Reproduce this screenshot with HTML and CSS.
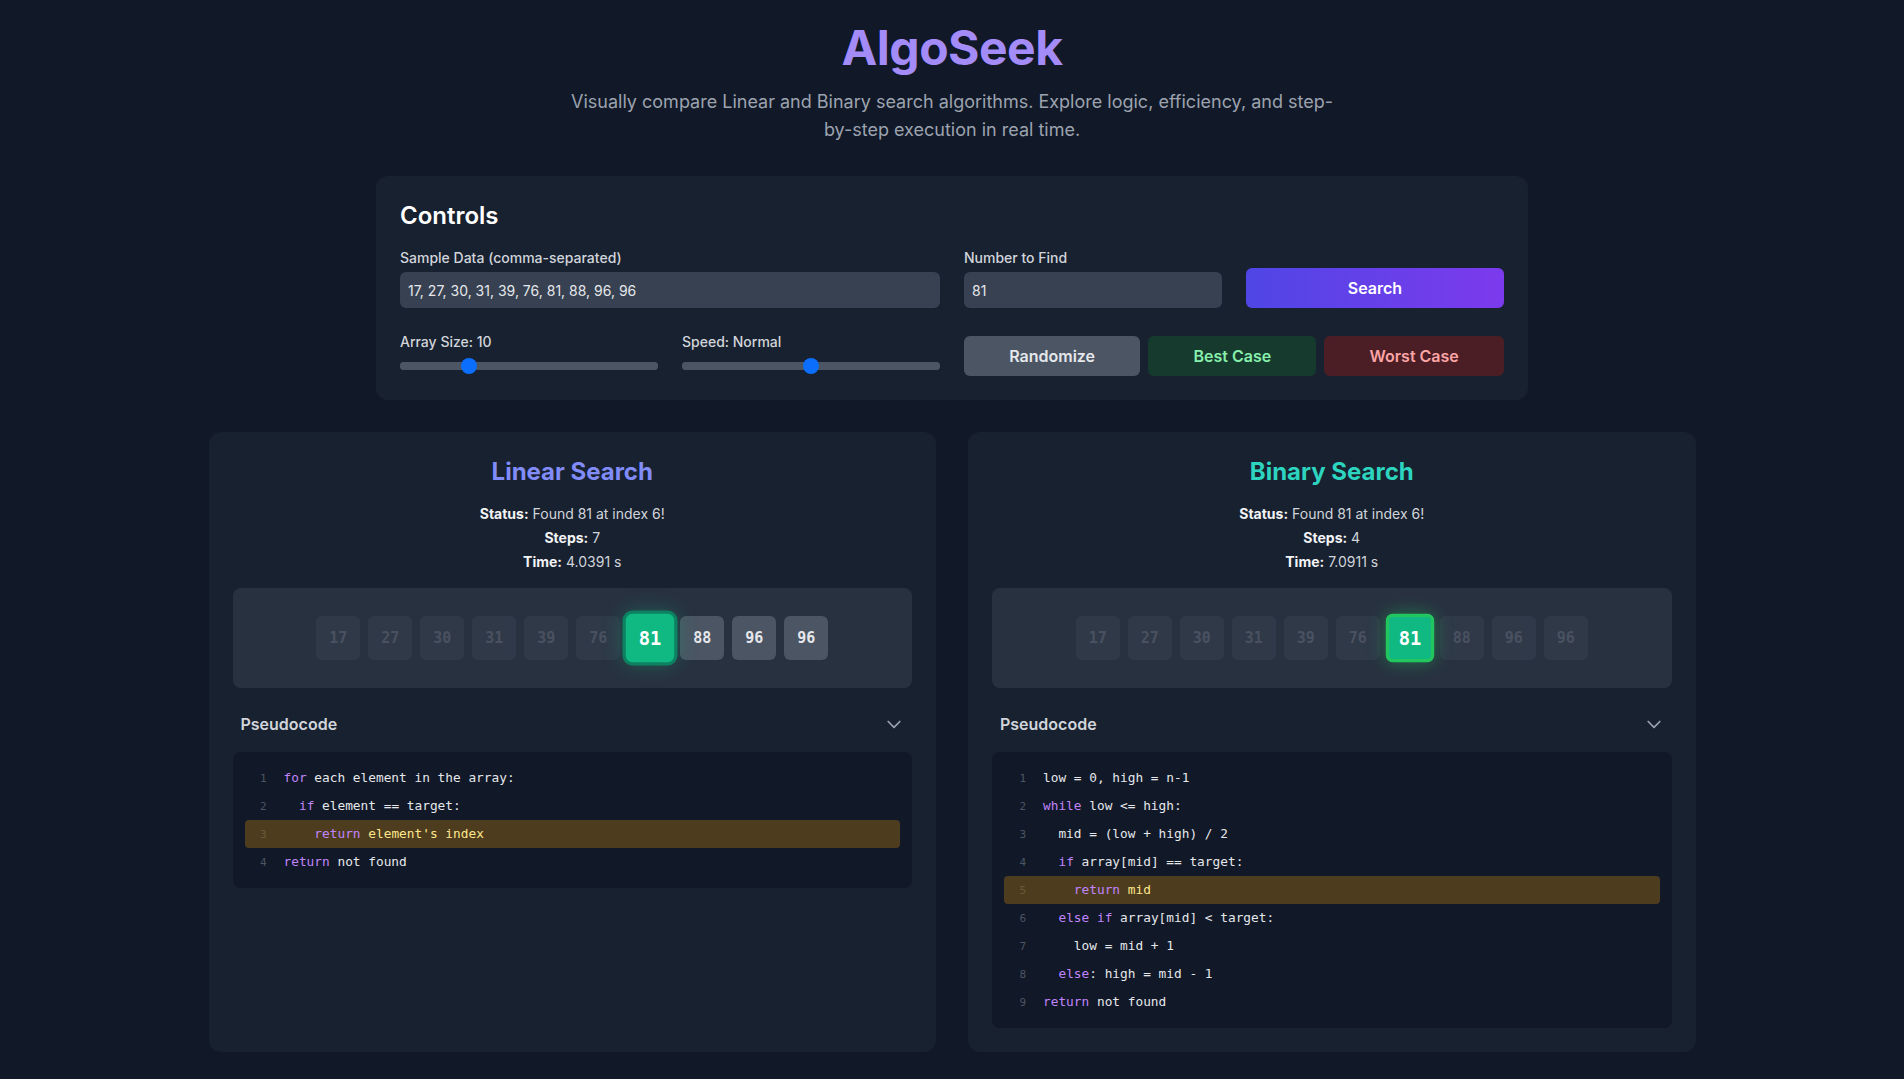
FILE: index.html
```html
<!DOCTYPE html>
<html lang="en">
<head>
<meta charset="utf-8">
<title>AlgoSeek</title>
<link rel="stylesheet" href="styles.css">
</head>
<body>
<div class="page">
  <header class="hero">
    <h1 class="brand">AlgoSeek</h1>
    <p class="tagline">Visually compare Linear and Binary search algorithms. Explore logic, efficiency, and step-by-step execution in real time.</p>
  </header>

  <section class="card controls">
    <h2 class="card-title">Controls</h2>
    <div class="controls-grid">
      <div class="field span-2">
        <label class="label">Sample Data (comma-separated)</label>
        <input class="text-input" type="text" value="17, 27, 30, 31, 39, 76, 81, 88, 96, 96">
      </div>
      <div class="field">
        <label class="label">Number to Find</label>
        <input class="text-input" type="text" value="81">
      </div>
      <button class="btn btn-search">Search</button>

      <div class="field slider-field">
        <label class="label">Array Size: 10</label>
        <input class="range" type="range" min="5" max="25" value="10">
      </div>
      <div class="field slider-field">
        <label class="label">Speed: Normal</label>
        <input class="range" type="range" min="0" max="100" value="50">
      </div>
      <div class="btn-row span-2">
        <button class="btn btn-gray">Randomize</button>
        <button class="btn btn-best">Best Case</button>
        <button class="btn btn-worst">Worst Case</button>
      </div>
    </div>
  </section>

  <main class="panels">
    <section class="card panel">
      <h2 class="panel-title linear">Linear Search</h2>
      <div class="stats">
        <p><b>Status:</b> Found 81 at index 6!</p>
        <p><b>Steps:</b> 7</p>
        <p><b>Time:</b> 4.0391 s</p>
      </div>
      <div class="array-box">
        <div class="cell dim">17</div>
        <div class="cell dim">27</div>
        <div class="cell dim">30</div>
        <div class="cell dim">31</div>
        <div class="cell dim">39</div>
        <div class="cell dim">76</div>
        <div class="cell found found-linear">81</div>
        <div class="cell">88</div>
        <div class="cell">96</div>
        <div class="cell">96</div>
      </div>
      <button class="pseudo-head">
        <span>Pseudocode</span>
        <svg class="chev" width="20" height="20" viewBox="0 0 24 24" fill="none" stroke="currentColor" stroke-width="2" stroke-linecap="round" stroke-linejoin="round"><path d="M19 9l-7 7-7-7"/></svg>
      </button>
      <div class="code">
        <div class="line"><span class="ln">1</span><span class="kw">for</span> each element in the array:</div>
        <div class="line"><span class="ln">2</span>  <span class="kw">if</span> element == target:</div>
        <div class="line hl"><span class="ln">3</span>    <span class="kw">return</span> element's index</div>
        <div class="line"><span class="ln">4</span><span class="kw">return</span> not found</div>
      </div>
    </section>

    <section class="card panel">
      <h2 class="panel-title binary">Binary Search</h2>
      <div class="stats">
        <p><b>Status:</b> Found 81 at index 6!</p>
        <p><b>Steps:</b> 4</p>
        <p><b>Time:</b> 7.0911 s</p>
      </div>
      <div class="array-box">
        <div class="cell dim">17</div>
        <div class="cell dim">27</div>
        <div class="cell dim">30</div>
        <div class="cell dim">31</div>
        <div class="cell dim">39</div>
        <div class="cell dim">76</div>
        <div class="cell found found-binary">81</div>
        <div class="cell dim">88</div>
        <div class="cell dim">96</div>
        <div class="cell dim">96</div>
      </div>
      <button class="pseudo-head">
        <span>Pseudocode</span>
        <svg class="chev" width="20" height="20" viewBox="0 0 24 24" fill="none" stroke="currentColor" stroke-width="2" stroke-linecap="round" stroke-linejoin="round"><path d="M19 9l-7 7-7-7"/></svg>
      </button>
      <div class="code">
        <div class="line"><span class="ln">1</span>low = 0, high = n-1</div>
        <div class="line"><span class="ln">2</span><span class="kw">while</span> low &lt;= high:</div>
        <div class="line"><span class="ln">3</span>  mid = (low + high) / 2</div>
        <div class="line"><span class="ln">4</span>  <span class="kw">if</span> array[mid] == target:</div>
        <div class="line hl"><span class="ln">5</span>    <span class="kw">return</span> mid</div>
        <div class="line"><span class="ln">6</span>  <span class="kw">else if</span> array[mid] &lt; target:</div>
        <div class="line"><span class="ln">7</span>    low = mid + 1</div>
        <div class="line"><span class="ln">8</span>  <span class="kw">else</span>: high = mid - 1</div>
        <div class="line"><span class="ln">9</span><span class="kw">return</span> not found</div>
      </div>
    </section>
  </main>
</div>
</body>
</html>
```

FILE: styles.css
```css
* { box-sizing: border-box; }

html, body {
  margin: 0;
  padding: 0;
  background: #111827;
  color: #e5e7eb;
  font-family: Inter, "Noto Sans", "Liberation Sans", sans-serif;
}

.page {
  padding: 24px 0 32px;
}

.hero {
  text-align: center;
  margin-bottom: 32px;
}

.brand {
  margin: 0 0 16px;
  font-size: 48px;
  line-height: 48px;
  font-weight: 700;
  color: #a38bf8;
  letter-spacing: -0.5px;
}

.tagline {
  margin: 0 auto;
  max-width: 768px;
  font-size: 18px;
  line-height: 28px;
  color: #9ca3af;
}

.card {
  background: rgba(31, 41, 55, 0.5);
  border-radius: 12px;
}

.controls {
  max-width: 1152px;
  margin: 0 auto 32px;
  padding: 24px;
}

.card-title {
  margin: 0 0 16px;
  font-size: 24px;
  line-height: 32px;
  font-weight: 600;
  color: #ffffff;
}

.controls-grid {
  display: grid;
  grid-template-columns: repeat(4, 1fr);
  column-gap: 24px;
  row-gap: 24px;
  align-items: end;
}

.span-2 { grid-column: span 2; }

.field {
  display: flex;
  flex-direction: column;
}

.label {
  font-size: 14px;
  line-height: 20px;
  font-weight: 500;
  color: #d1d5db;
  margin-bottom: 4px;
}

.text-input {
  height: 36px;
  border: none;
  border-radius: 6px;
  background: #374151;
  color: #e5e7eb;
  font-family: inherit;
  font-size: 14px;
  padding: 0 8px;
  outline: none;
}

.slider-field .label { margin-bottom: 10px; }

.range {
  -webkit-appearance: none;
  appearance: none;
  width: 100%;
  height: 8px;
  margin: 0 0 6px;
  border-radius: 4px;
  background: #4b5563;
  outline: none;
}
.range::-webkit-slider-runnable-track {
  height: 8px;
  border-radius: 4px;
  background: #4b5563;
}
.range::-webkit-slider-thumb {
  -webkit-appearance: none;
  appearance: none;
  width: 16px;
  height: 16px;
  margin-top: -4px;
  border-radius: 50%;
  background: #0b6efd;
  border: none;
}

.btn {
  height: 40px;
  border: none;
  border-radius: 6px;
  font-family: inherit;
  font-size: 16px;
  font-weight: 600;
  cursor: pointer;
  padding: 0 16px;
}

.btn-search {
  color: #ffffff;
  background: linear-gradient(to right, #4f46e5, #7c3aed);
}

.btn-row {
  display: flex;
  gap: 8px;
}
.btn-row .btn { flex: 1 1 auto; }

.btn-gray { background: #4b5563; color: #e5e7eb; }
.btn-best { background: #163a2e; color: #86efac; }
.btn-worst { background: #4b1e26; color: #fca5a5; }

.panels {
  max-width: 1487px;
  margin: 0 auto;
  display: grid;
  grid-template-columns: 1fr 1fr;
  gap: 32px;
}

.panel {
  padding: 24px;
  display: flex;
  flex-direction: column;
}

.panel-title {
  margin: 0 0 16px;
  text-align: center;
  font-size: 24px;
  line-height: 32px;
  font-weight: 700;
}
.panel-title.linear { color: #818cf8; }
.panel-title.binary { color: #2dd4bf; }

.stats {
  text-align: center;
  font-size: 14px;
  line-height: 20px;
  color: #d1d5db;
  margin-bottom: 16px;
}
.stats p { margin: 0 0 4px; }
.stats p:last-child { margin-bottom: 0; }
.stats b { color: #f3f4f6; font-weight: 700; }

.array-box {
  background: rgba(55, 65, 81, 0.5);
  border-radius: 8px;
  padding: 28px 24px;
  display: flex;
  justify-content: center;
  gap: 8px;
}

.cell {
  width: 44px;
  height: 44px;
  border-radius: 6px;
  background: #4b5563;
  color: #e5e7eb;
  display: flex;
  align-items: center;
  justify-content: center;
  font-family: "DejaVu Sans Mono", "Liberation Mono", monospace;
  font-weight: 700;
  font-size: 15px;
}

.cell.dim {
  background: #374151;
  color: #6b7280;
  opacity: 0.5;
}

.cell.found {
  background: #10b981;
  color: #ffffff;
  font-size: 17px;
  transform: scale(1.1);
  position: relative;
  z-index: 1;
}
.cell.found-linear {
  box-shadow: 0 0 0 3px rgba(5, 150, 105, 0.75), 0 0 20px rgba(16, 185, 129, 0.45);
}
.cell.found-binary {
  border: 3px solid #22c55e;
  box-shadow: 0 0 16px rgba(34, 197, 94, 0.45);
}

.pseudo-head {
  margin-top: 16px;
  height: 40px;
  padding: 0 8px 0 8px;
  border: none;
  background: transparent;
  display: flex;
  align-items: center;
  justify-content: space-between;
  font-family: inherit;
  font-size: 16px;
  font-weight: 600;
  color: #d1d5db;
  cursor: pointer;
}

.chev { color: #9ca3af; display: block; }

.code {
  margin-top: 8px;
  background: #111827;
  border-radius: 8px;
  padding: 12px;
  font-family: "DejaVu Sans Mono", "Liberation Mono", monospace;
  font-size: 12.8px;
  color: #e5e7eb;
}

.line {
  height: 28px;
  line-height: 28px;
  padding: 0 8px;
  border-radius: 4px;
  white-space: pre;
}

.line.hl {
  background: rgba(245, 158, 11, 0.27);
  color: #fde68a;
}

.ln {
  display: inline-block;
  width: 14px;
  margin-right: 17px;
  text-align: right;
  font-size: 11px;
  color: #4b5563;
}
.line.hl .ln { color: #6b5a37; }

.kw { color: #c084fc; }
```
